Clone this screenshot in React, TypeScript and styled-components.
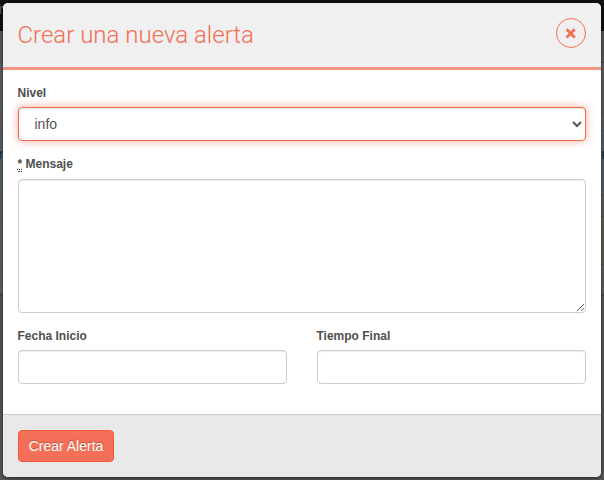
import React from "react";
import styled, { createGlobalStyle } from "styled-components";

const Global = createGlobalStyle`
  *, *::before, *::after { box-sizing: border-box; }
  body {
    margin: 0;
    overflow: hidden;
    font: 14px/20px "Liberation Sans", Arial, sans-serif;
    color: #555;
  }
`;

const Backdrop = styled.div`
  position: relative;
  height: 480px;
  padding: 3px 3.5px 3px 2.5px;
  overflow: hidden;
  background: linear-gradient(
    #111 0 31px, #5b5b5b 31px 62px, #484848 62px 63px, #626262 63px 113px,
    #555 113px 114px, #626262 114px 130px, #4b575e 130px 131px, #58646a 131px 195px,
    #4b575e 195px 196px, #626262 196px 216px, #5a564c 216px 217px, #65625c 217px 264px,
    #5a564c 264px 265px, #626262 265px 294px, #484848 294px 296px, #585858 296px
  );
`;

/* Glyphs of the dimmed page that show beside the dialog. */
const Behind = styled.span<{ $left: number; $top: number; $color: string }>`
  position: absolute;
  left: ${(p) => p.$left}px;
  top: ${(p) => p.$top}px;
  font-size: 14px;
  font-weight: bold;
  line-height: 16px;
  color: ${(p) => p.$color};
`;

const Dialog = styled.form`
  position: relative;
  display: flex;
  flex-direction: column;
  height: 474px;
  overflow: hidden;
  border-radius: 5px;
  background: #fff;
  box-shadow: 0 1px 4px rgba(0, 0, 0, 0.65);
`;

const Header = styled.header`
  display: flex;
  align-items: flex-start;
  justify-content: space-between;
  height: 67px;
  padding: 15px;
  background: #f0f0f0;
  border-bottom: 3px solid #f39582;
`;

const Title = styled.h3`
  margin: 0;
  font: 300 24px/34px Roboto, sans-serif;
  color: #f36e55;
`;

const Close = styled.button`
  display: grid;
  place-items: center;
  width: 30px;
  height: 30px;
  padding: 0;
  border: 1px solid #f36e55;
  border-radius: 50%;
  background: transparent;
  color: #f36e55;
`;

const Body = styled.div`
  flex: 1;
  padding: 13px 15px 0;
`;

const Field = styled.div`
  margin-bottom: 13px;
`;

const Label = styled.label<{ $gap?: number }>`
  display: block;
  margin-bottom: ${(p) => p.$gap ?? 4}px;
  font-size: 12px;
  font-weight: bold;
  line-height: 20px;
  color: #4f4f4f;
`;

const Required = styled.abbr`
  border-bottom: 1px dotted #4f4f4f;
  text-decoration: underline dotted;
`;

const Input = styled.input`
  display: block;
  width: 100%;
  height: 34px;
  padding: 6px 12px;
  border: 1px solid #ccc;
  border-radius: 4px;
  outline: 0;
  background: #fff;
  color: #555;
  font: inherit;
  box-shadow: inset 0 1px 1px rgba(0, 0, 0, 0.075);
`;

const Select = styled(Input).attrs({ as: "select" })`
  border-color: #f5674d;
  box-shadow: inset 0 1px 1px rgba(0, 0, 0, 0.075), 0 0 8px rgba(246, 90, 65, 0.5);
`;

const TextArea = styled(Input).attrs({ as: "textarea" })`
  height: 134px;
  resize: both;
`;

const Columns = styled.div`
  display: grid;
  grid-template-columns: 1fr 1fr;
  gap: 30px;
`;

const Footer = styled.footer`
  height: 63px;
  padding: 15px;
  border-top: 1px solid #ccc;
  background: #e9e9e9;
`;

const Submit = styled.button`
  width: 96px;
  height: 32px;
  padding: 0 0 0 1px;
  border: 1px solid #f6583c;
  border-radius: 4px;
  background: #f46f57;
  color: #fff;
  font: inherit;
  text-shadow: 0 -1px 0 rgba(0, 0, 0, 0.25);
`;

export default function App() {
  return (
    <>
      <Global />
      <Backdrop>
        <Behind $left={-2} $top={1} $color="#555">r</Behind>
        <Behind $left={-2} $top={146} $color="#173a50">r</Behind>
        <Behind $left={601} $top={146} $color="#173a50">n</Behind>
        <Dialog>
          <Header>
            <Title>Crear una nueva alerta</Title>
            <Close type="button" aria-label="Cerrar">
              <svg width="12" height="12" viewBox="0 0 12 12">
                <path d="M1.6 2.3 9.8 10.5M9.8 2.3 1.6 10.5" fill="none" stroke="currentColor" strokeWidth="2.8" />
              </svg>
            </Close>
          </Header>
          <Body>
            <Field>
              <Label htmlFor="level">Nivel</Label>
              <Select id="level"><option>info</option></Select>
            </Field>
            <Field>
              <Label htmlFor="message" $gap={5}><Required>*</Required> Mensaje</Label>
              <TextArea id="message" />
            </Field>
            <Columns>
              <Field>
                <Label htmlFor="start">Fecha Inicio</Label>
                <Input id="start" />
              </Field>
              <Field>
                <Label htmlFor="end">Tiempo Final</Label>
                <Input id="end" />
              </Field>
            </Columns>
          </Body>
          <Footer>
            <Submit type="button">Crear Alerta</Submit>
          </Footer>
        </Dialog>
      </Backdrop>
    </>
  );
}
